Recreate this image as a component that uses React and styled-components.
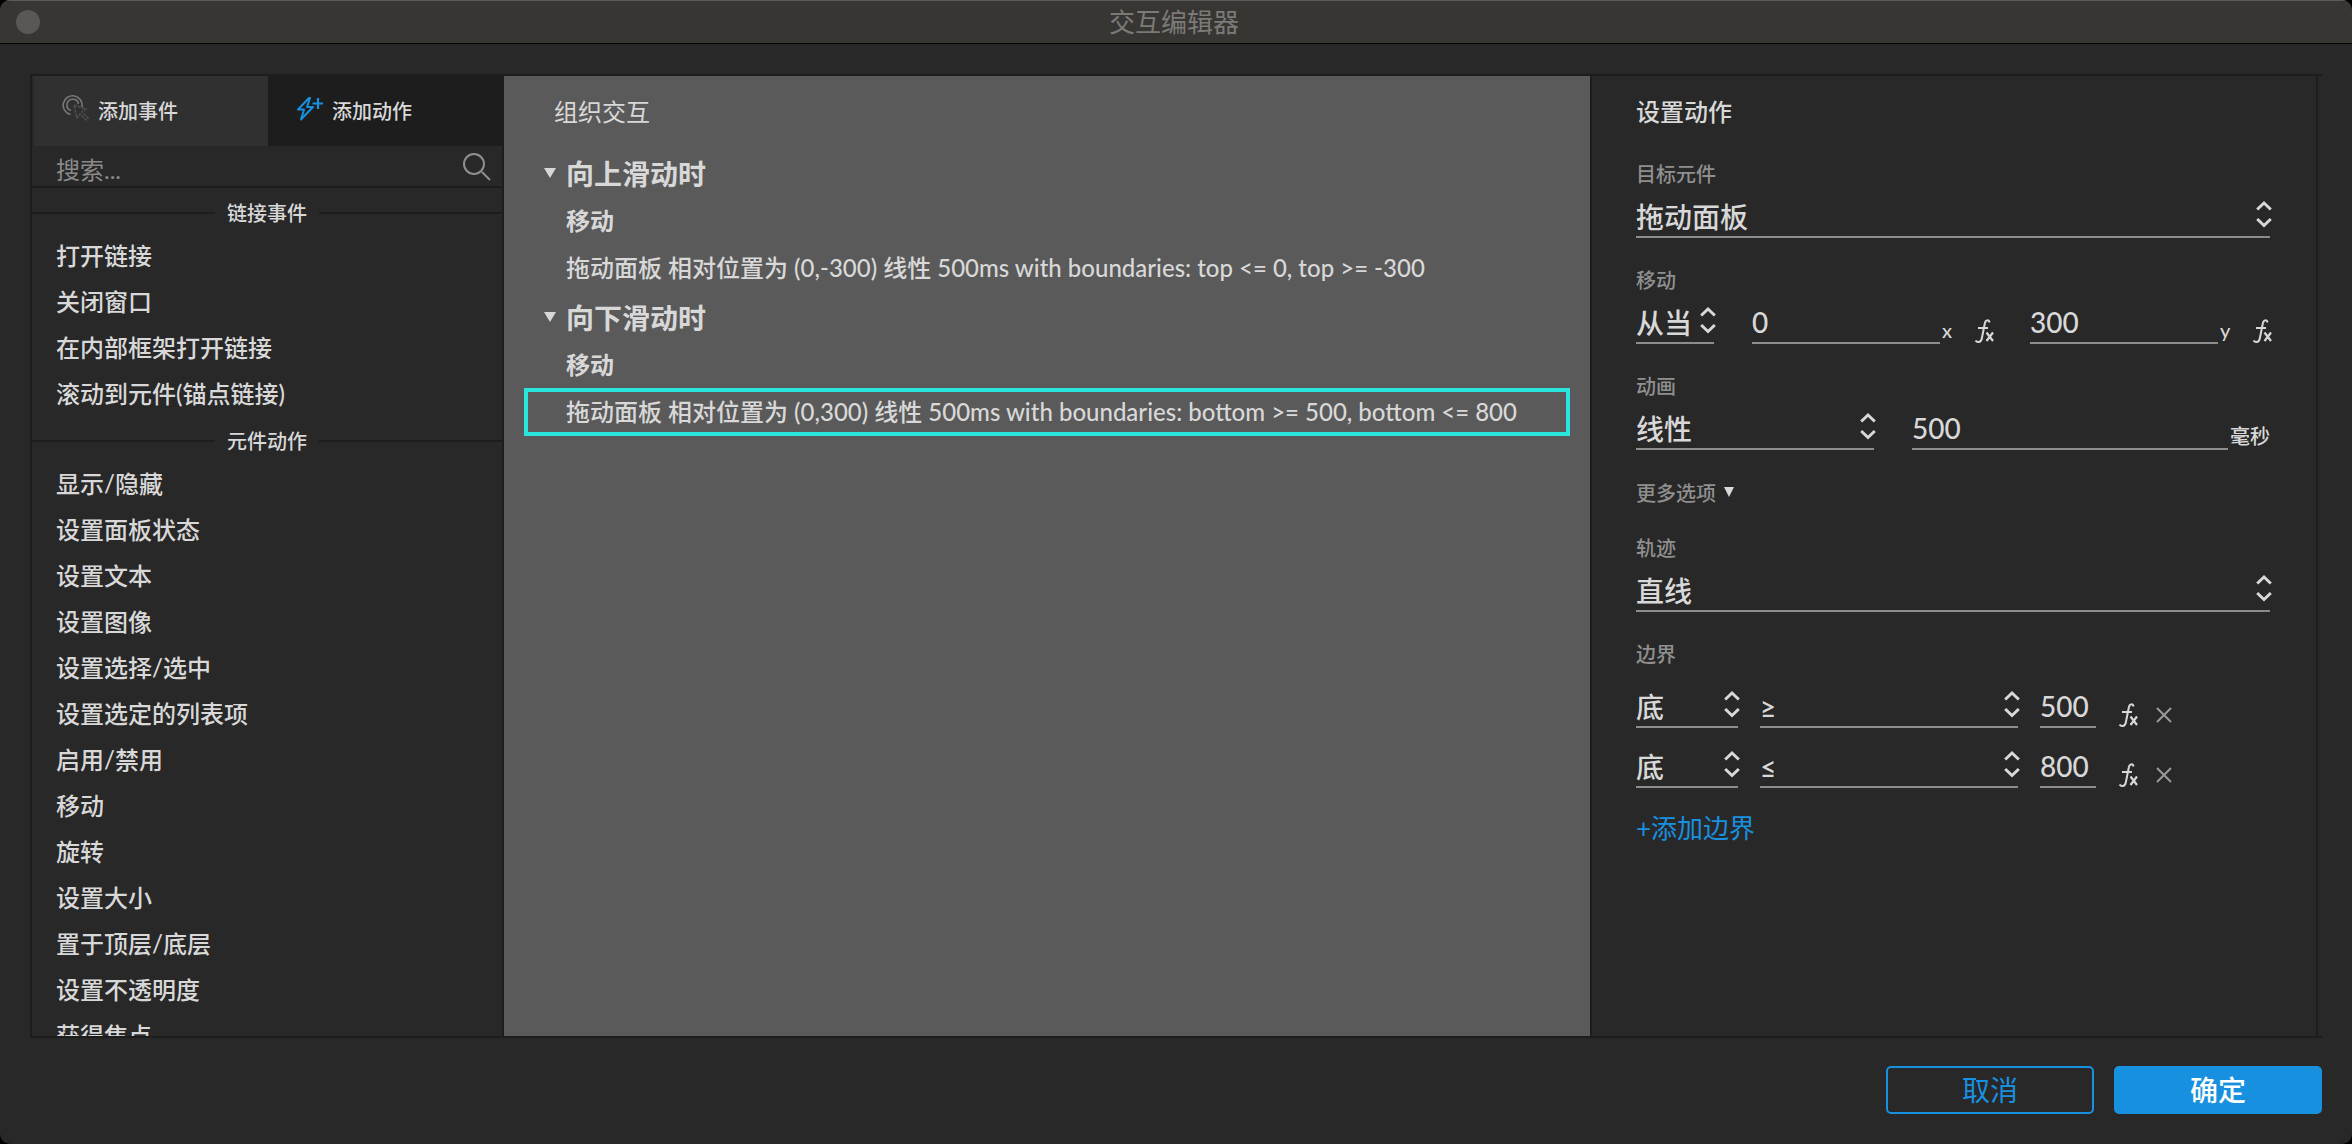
import React from "react";
import styled, { createGlobalStyle } from "styled-components";

const GlobalStyle = createGlobalStyle`
  * {
    box-sizing: border-box;
  }

  body {
    margin: 0;
    background: #000;
    color: #d8d8d8;
    font-family: Lato, "Noto Sans CJK SC", sans-serif;
    font-size: 24px;
  }

  button, input, select {
    margin: 0;
    padding: 0;
    border: none;
    border-radius: 0;
    background: none;
    color: inherit;
    font: inherit;
  }

  h1, h2, h3, h4, p, ul {
    margin: 0;
    padding: 0;
    font-weight: 400;
  }
`;

const Window = styled.div`
  display: flex;
  flex-direction: column;
  height: 100vh;
  background: #282828;
  border-radius: 10px;
  overflow: hidden;
`;

const TitleBar = styled.header`
  display: flex;
  align-items: center;
  height: 44px;
  padding: 0 16px;
  background: #383633;
  border-top: 1px solid #5c5b59;
  border-bottom: 1px solid #000;
`;

const CloseDot = styled.button`
  width: 24px;
  height: 24px;
  border-radius: 50%;
  background: #595856;
`;

const WindowTitle = styled.h1`
  flex: 1;
  padding-right: 28px;
  text-align: center;
  font-size: 26px;
  line-height: 40px;
  color: #7b7a78;
`;

const Panels = styled.main`
  display: flex;
  flex: 1;
  min-height: 0;
  margin: 30px 30px 0;
  border: solid #1d1d1d;
  border-width: 2px 0 2px 2px;
`;

const Sidebar = styled.section`
  display: flex;
  flex-direction: column;
  flex: 0 0 472px;
  border-right: 2px solid #1d1d1d;
`;

const Tabs = styled.div`
  display: flex;
  padding-left: 2px;
`;

const Tab = styled.button`
  display: flex;
  align-items: center;
  flex: 1;
  gap: 8px;
  height: 70px;
  padding: 0 0 2px 28px;
  background: ${(p) => (p.$active ? "#1d1d1d" : "#303030")};
  font-size: 20px;
  font-weight: 500;

  svg {
    margin-bottom: 4px;
  }
`;

const SearchBar = styled.label`
  display: flex;
  align-items: center;
  height: 42px;
  padding: 2px 10px 0 24px;
  border-bottom: 2px solid #1d1d1d;

  input {
    flex: 1;
    min-width: 0;
    padding-top: 4px;
    outline: none;
  }

  input::placeholder {
    color: #8a8a8a;
    opacity: 1;
  }
`;

const ActionScroll = styled.div`
  flex: 1;
  overflow: hidden;
`;

const GroupTitle = styled.h3`
  display: flex;
  align-items: center;
  gap: 12px;
  height: 44px;
  padding-top: 6px;
  font-size: 20px;
  font-weight: 500;
  line-height: 24px;

  &::before,
  &::after {
    content: "";
    flex: 1;
    height: 2px;
    background: #1d1d1d;
  }
`;

const ActionList = styled.ul`
  list-style: none;
`;

const ActionItem = styled.button`
  display: block;
  width: 100%;
  height: 46px;
  padding: 0 0 2px 24px;
  text-align: left;
  font-weight: 500;
`;

const Organizer = styled.section`
  flex: 1;
  min-width: 0;
  padding: 20px;
  background: #5a5a5a;
`;

const PanelTitle = styled.h2`
  margin-bottom: ${(p) => p.$after}px;
  padding-left: ${(p) => p.$indent || 0}px;
  line-height: 32px;
  font-size: 24px;
  font-weight: ${(p) => (p.$strong ? 500 : 400)};
`;

const Interaction = styled.div`
  margin-bottom: 2px;
`;

const EventName = styled.button`
  display: flex;
  align-items: center;
  gap: 10px;
  height: 48px;
  padding: 0 0 2px 20px;
  font-size: 28px;
  font-weight: 700;
`;

const ActionName = styled.h4`
  padding-left: 42px;
  line-height: 46px;
  font-size: 24px;
  font-weight: 700;
`;

const ActionDetail = styled.p`
  padding-left: 38px;
  border: 4px solid ${(p) => (p.$selected ? "#2ae4de" : "transparent")};
  line-height: 40px;
  font-weight: 500;
`;

const Settings = styled.section`
  display: flex;
  flex-direction: column;
  flex: 0 0 728px;
  min-width: 0;
  margin-right: 4px;
  padding: 20px 46px 0 44px;
  border: solid #1d1d1d;
  border-width: 0 2px;
`;

const FieldGroup = styled.fieldset`
  min-width: 0;
  margin: 0;
  padding: 0;
  border: none;
`;

const FieldLabel = styled.legend`
  height: 36px;
  margin-bottom: ${(p) => p.$after || 0}px;
  padding: 0;
  line-height: 36px;
  font-size: 20px;
  font-weight: 500;
  color: #8f8f8f;
`;

const FieldRow = styled.div`
  display: flex;
  align-items: flex-end;
  height: 46px;
  margin-bottom: ${(p) => p.$after || 24}px;
`;

const SelectBox = styled.div`
  display: grid;
  flex: ${(p) => (p.$width ? `0 0 ${p.$width}px` : "1")};
  height: 46px;
  border-bottom: 2px solid #8c8c8c;
  margin-right: ${(p) => p.$gap || 0}px;

  select {
    grid-area: 1 / 1;
    appearance: none;
    min-width: 0;
    padding-top: 6px;
    outline: none;
    font-size: 28px;
    font-weight: 500;
  }

  svg {
    grid-area: 1 / 1;
    justify-self: end;
    align-self: start;
    margin: 8px -2px 0 0;
    pointer-events: none;
  }
`;

const TextField = styled.input`
  flex: ${(p) => (p.$width ? `0 0 ${p.$width}px` : "1")};
  min-width: 0;
  height: 46px;
  padding-top: 4px;
  border-bottom: 2px solid #8c8c8c;
  outline: none;
  font-size: 28px;
  font-weight: 500;
`;

const Unit = styled.label`
  flex: 0 0 ${(p) => p.$width}px;
  padding-left: 2px;
  line-height: 28px;
  font-size: 20px;
  font-weight: 500;
`;

const IconButton = styled.button`
  display: flex;
  margin-right: ${(p) => p.$gap || 0}px;
`;

const BoundaryTools = styled.div`
  display: flex;
  align-items: center;
  gap: 18px;
  padding-left: 22px;
`;

const MoreOptions = styled.button`
  display: flex;
  align-items: center;
  align-self: flex-start;
  gap: 8px;
  height: 32px;
  margin-bottom: 22px;
  font-size: 20px;
  font-weight: 500;
  color: #8f8f8f;
`;

const AddLink = styled.button`
  align-self: flex-start;
  margin-top: 10px;
  line-height: 32px;
  font-size: 26px;
  color: #1890e0;
`;

const Footer = styled.footer`
  display: flex;
  justify-content: flex-end;
  gap: 20px;
  padding: 28px 30px 30px;
`;

const FooterButton = styled.button`
  width: 208px;
  height: 48px;
  border: 2px solid #1890e0;
  border-radius: 5px;
  background: ${(p) => (p.$primary ? "#1890e0" : "transparent")};
  color: ${(p) => (p.$primary ? "#fff" : "#1890e0")};
  font-size: 28px;
  font-weight: ${(p) => (p.$primary ? 500 : 400)};
  line-height: 40px;
`;

const ClickIcon = () => (
  <svg width="28" height="28" viewBox="0 0 28 28" fill="none" aria-hidden="true">
    <path d="M8.500 20.500A9.500 9.500 0 1 1 20 13" stroke="#777" strokeWidth="1.600" />
    <path d="M9 16.500A5.800 5.800 0 1 1 16.500 10" stroke="#777" strokeWidth="1.600" />
    <path d="M12 11l12 4-4 3 6 6-2 2-6-6-3 4z" stroke="#505050" strokeWidth="1.500" strokeDasharray="3 1" />
  </svg>
);

const BoltPlusIcon = () => (
  <svg width="28" height="28" viewBox="0 0 28 28" fill="none" stroke="#1890e0" aria-hidden="true">
    <path d="M13 4L2 15.500h6L5 25.500 17 13h-6l3-9z" strokeWidth="2" strokeLinejoin="round" />
    <path d="M22 4v11M16.500 9.500h10.500" strokeWidth="2.200" />
  </svg>
);

const SearchIcon = () => (
  <svg width="30" height="30" viewBox="0 0 30 30" fill="none" stroke="#8f8f8f" strokeWidth="2" aria-hidden="true">
    <circle cx="12" cy="12" r="10" />
    <path d="M20 20l8 8" />
  </svg>
);

const Chevrons = () => (
  <svg width="16" height="28" viewBox="0 0 16 28" fill="none" stroke="#d8d8d8" strokeWidth="3" aria-hidden="true">
    <path d="M1.200 9.500L8 3l6.800 6.500M1.200 19L8 25.500l6.800-6.500" />
  </svg>
);

const Triangle = ({ width = 12 }) => (
  <svg width={width} height="10" viewBox="0 0 12 10" preserveAspectRatio="none" fill="#d8d8d8" aria-hidden="true">
    <path d="M0 0h12L6 10z" />
  </svg>
);

const FxIcon = () => (
  <svg width="20" height="26" viewBox="0 0 20 26" fill="none" stroke="#d8d8d8" aria-hidden="true">
    <path d="M15.500 4.500C15 1.500 11.500 1.500 10.800 5.500L7.800 20.500c-.7 4-4.600 4.500-6.300 2M4 10h10" strokeWidth="2" />
    <path d="M12.500 14.500l6.500 8.500M19 14.500l-6.500 8.500" strokeWidth="2.200" />
  </svg>
);

const RemoveIcon = () => (
  <svg width="16" height="16" viewBox="0 0 16 16" stroke="#9a9a9a" strokeWidth="2" aria-hidden="true">
    <path d="M1 1l14 14M15 1L1 15" />
  </svg>
);

const actionGroups = [
  { title: "链接事件", items: ["打开链接", "关闭窗口", "在内部框架打开链接", "滚动到元件(锚点链接)"] },
  {
    title: "元件动作",
    items: [
      "显示/隐藏",
      "设置面板状态",
      "设置文本",
      "设置图像",
      "设置选择/选中",
      "设置选定的列表项",
      "启用/禁用",
      "移动",
      "旋转",
      "设置大小",
      "置于顶层/底层",
      "设置不透明度",
      "获得焦点",
    ],
  },
];

const interactions = [
  {
    event: "向上滑动时",
    action: "移动",
    detail: "拖动面板 相对位置为 (0,-300) 线性 500ms with boundaries: top <= 0, top >= -300",
  },
  {
    event: "向下滑动时",
    action: "移动",
    detail: "拖动面板 相对位置为 (0,300) 线性 500ms with boundaries: bottom >= 500, bottom <= 800",
    selected: true,
  },
];

const boundaries = [
  { side: "底", operator: "≥", value: "500" },
  { side: "底", operator: "≤", value: "800" },
];

function Select({ label, value, width, gap }) {
  return (
    <SelectBox $width={width} $gap={gap}>
      <select aria-label={label} defaultValue={value}>
        <option>{value}</option>
      </select>
      <Chevrons />
    </SelectBox>
  );
}

export default function App() {
  return (
    <>
      <GlobalStyle />
      <Window>
        <TitleBar>
          <CloseDot aria-label="关闭" />
          <WindowTitle>交互编辑器</WindowTitle>
        </TitleBar>
        <Panels>
          <Sidebar>
            <Tabs>
              <Tab>
                <ClickIcon />
                添加事件
              </Tab>
              <Tab $active>
                <BoltPlusIcon />
                添加动作
              </Tab>
            </Tabs>
            <SearchBar>
              <input type="text" placeholder="搜索..." aria-label="搜索" />
              <SearchIcon />
            </SearchBar>
            <ActionScroll>
              {actionGroups.map((group) => (
                <div key={group.title}>
                  <GroupTitle>{group.title}</GroupTitle>
                  <ActionList>
                    {group.items.map((item) => (
                      <li key={item}>
                        <ActionItem>{item}</ActionItem>
                      </li>
                    ))}
                  </ActionList>
                </div>
              ))}
            </ActionScroll>
          </Sidebar>

          <Organizer>
            <PanelTitle $after={22} $indent={30}>组织交互</PanelTitle>
            {interactions.map((item) => (
              <Interaction key={item.event}>
                <EventName>
                  <Triangle />
                  {item.event}
                </EventName>
                <ActionName>{item.action}</ActionName>
                <ActionDetail $selected={item.selected}>{item.detail}</ActionDetail>
              </Interaction>
            ))}
          </Organizer>

          <Settings>
            <PanelTitle $after={28} $strong>设置动作</PanelTitle>
            <FieldGroup>
              <FieldLabel>目标元件</FieldLabel>
              <FieldRow>
                <Select label="目标元件" value="拖动面板" />
              </FieldRow>
            </FieldGroup>
            <FieldGroup>
              <FieldLabel>移动</FieldLabel>
              <FieldRow>
                <Select label="移动方式" value="从当" width={78} gap={38} />
                <TextField id="move-x" defaultValue="0" />
                <Unit htmlFor="move-x" $width={34}>x</Unit>
                <IconButton aria-label="x 函数" $gap={36}>
                  <FxIcon />
                </IconButton>
                <TextField id="move-y" defaultValue="300" />
                <Unit htmlFor="move-y" $width={34}>y</Unit>
                <IconButton aria-label="y 函数" $gap={-2}>
                  <FxIcon />
                </IconButton>
              </FieldRow>
            </FieldGroup>
            <FieldGroup>
              <FieldLabel>动画</FieldLabel>
              <FieldRow $after={26}>
                <Select label="动画" value="线性" width={238} gap={38} />
                <TextField id="duration" defaultValue="500" />
                <Unit htmlFor="duration" $width={42}>毫秒</Unit>
              </FieldRow>
            </FieldGroup>
            <MoreOptions>
              更多选项
              <Triangle width={10} />
            </MoreOptions>
            <FieldGroup>
              <FieldLabel>轨迹</FieldLabel>
              <FieldRow>
                <Select label="轨迹" value="直线" />
              </FieldRow>
            </FieldGroup>
            <FieldGroup>
              <FieldLabel $after={10}>边界</FieldLabel>
              {boundaries.map((row) => (
                <FieldRow key={row.operator} $after={14}>
                  <Select label="边" value={row.side} width={102} gap={22} />
                  <Select label="比较" value={row.operator} width={258} gap={22} />
                  <TextField aria-label="边界值" defaultValue={row.value} $width={56} />
                  <BoundaryTools>
                    <IconButton aria-label="函数">
                      <FxIcon />
                    </IconButton>
                    <IconButton aria-label="删除边界">
                      <RemoveIcon />
                    </IconButton>
                  </BoundaryTools>
                </FieldRow>
              ))}
            </FieldGroup>
            <AddLink>+添加边界</AddLink>
          </Settings>
        </Panels>
        <Footer>
          <FooterButton>取消</FooterButton>
          <FooterButton $primary>确定</FooterButton>
        </Footer>
      </Window>
    </>
  );
}
